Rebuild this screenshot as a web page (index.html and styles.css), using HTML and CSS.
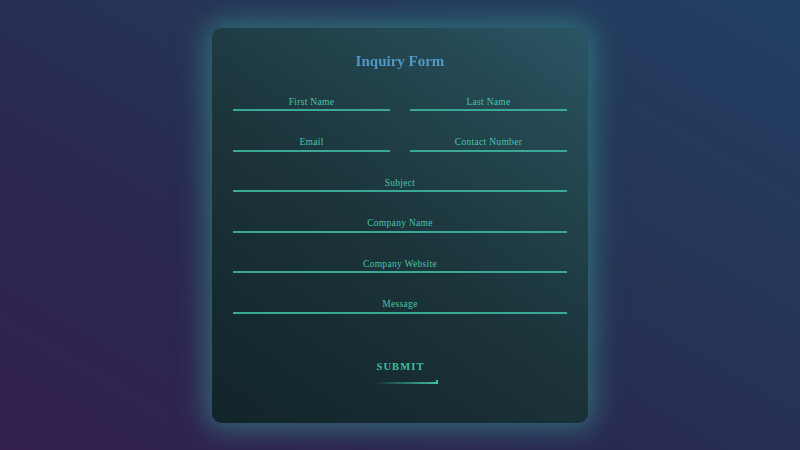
FILE: index.html
```html
<!DOCTYPE html>
<html>
<head>
<meta charset="utf-8">
<link rel="stylesheet" href="styles.css">
</head>
<body>
<div class="card">
  <h1 class="title">Inquiry Form</h1>
  <form class="form">
    <div class="field"><span class="label">First Name</span></div>
    <div class="field"><span class="label">Last Name</span></div>
    <div class="field"><span class="label">Email</span></div>
    <div class="field"><span class="label">Contact Number</span></div>
    <div class="field wide"><span class="label">Subject</span></div>
    <div class="field wide"><span class="label">Company Name</span></div>
    <div class="field wide"><span class="label">Company Website</span></div>
    <div class="field wide"><span class="label">Message</span></div>
  </form>
  <div class="actions">
    <button class="submit" type="button">SUBMIT<span class="underline"></span></button>
  </div>
</div>
</body>
</html>
```
FILE: styles.css
```css
html, body {
  margin: 0;
  height: 100%;
}
body {
  width: 800px;
  height: 450px;
  overflow: hidden;
  background: linear-gradient(30deg, #33204f 0%, #2a2852 35%, #263456 60%, #213f63 100%);
  font-family: "Liberation Serif", "Times New Roman", serif;
  display: flex;
  justify-content: center;
  align-items: flex-start;
}
.card {
  margin-top: 28px;
  width: 376px;
  height: 395px;
  box-sizing: border-box;
  padding: 23px 21px 0;
  border-radius: 10px;
  background: linear-gradient(35deg, #11242a 0%, #1b3339 45%, #244852 80%, #2b5565 100%);
  box-shadow: 0 0 28px 6px rgba(58, 160, 145, 0.55);
}
.title {
  margin: 0 0 18px;
  text-align: center;
  font-size: 15px;
  line-height: 20px;
  font-weight: bold;
  background: linear-gradient(90deg, #4a8fcf 0%, #58a6c0 100%);
  -webkit-background-clip: text;
  background-clip: text;
  color: transparent;
}
.form {
  display: grid;
  grid-template-columns: 1fr 1fr;
  column-gap: 20px;
  row-gap: 18.6px;
}
.field {
  height: 20px;
  border-bottom: 2px solid #3aa897;
  text-align: center;
  box-sizing: content-box;
}
.field.wide {
  grid-column: 1 / span 2;
}
.label {
  display: block;
  padding-top: 6.5px;
  font-size: 9.5px;
  line-height: 12px;
  letter-spacing: 0.3px;
  color: #4ac4ac;
}
.actions {
  display: flex;
  justify-content: center;
  margin-top: 46.5px;
}
.submit {
  position: relative;
  background: none;
  border: none;
  padding: 0 0 0 1px;
  font-family: "Liberation Serif", "Times New Roman", serif;
  font-size: 10.5px;
  line-height: 14px;
  font-weight: bold;
  letter-spacing: 1.1px;
  color: #3cbfa1;
}
.underline {
  position: absolute;
  left: -2px;
  top: 20px;
  width: 65px;
  height: 4px;
  box-sizing: border-box;
  border-right: 2px solid #40c2a6;
  background: linear-gradient(90deg, rgba(64, 194, 166, 0) 0%, rgba(64, 194, 166, 0.95) 100%) bottom / 100% 2px no-repeat;
}
```
